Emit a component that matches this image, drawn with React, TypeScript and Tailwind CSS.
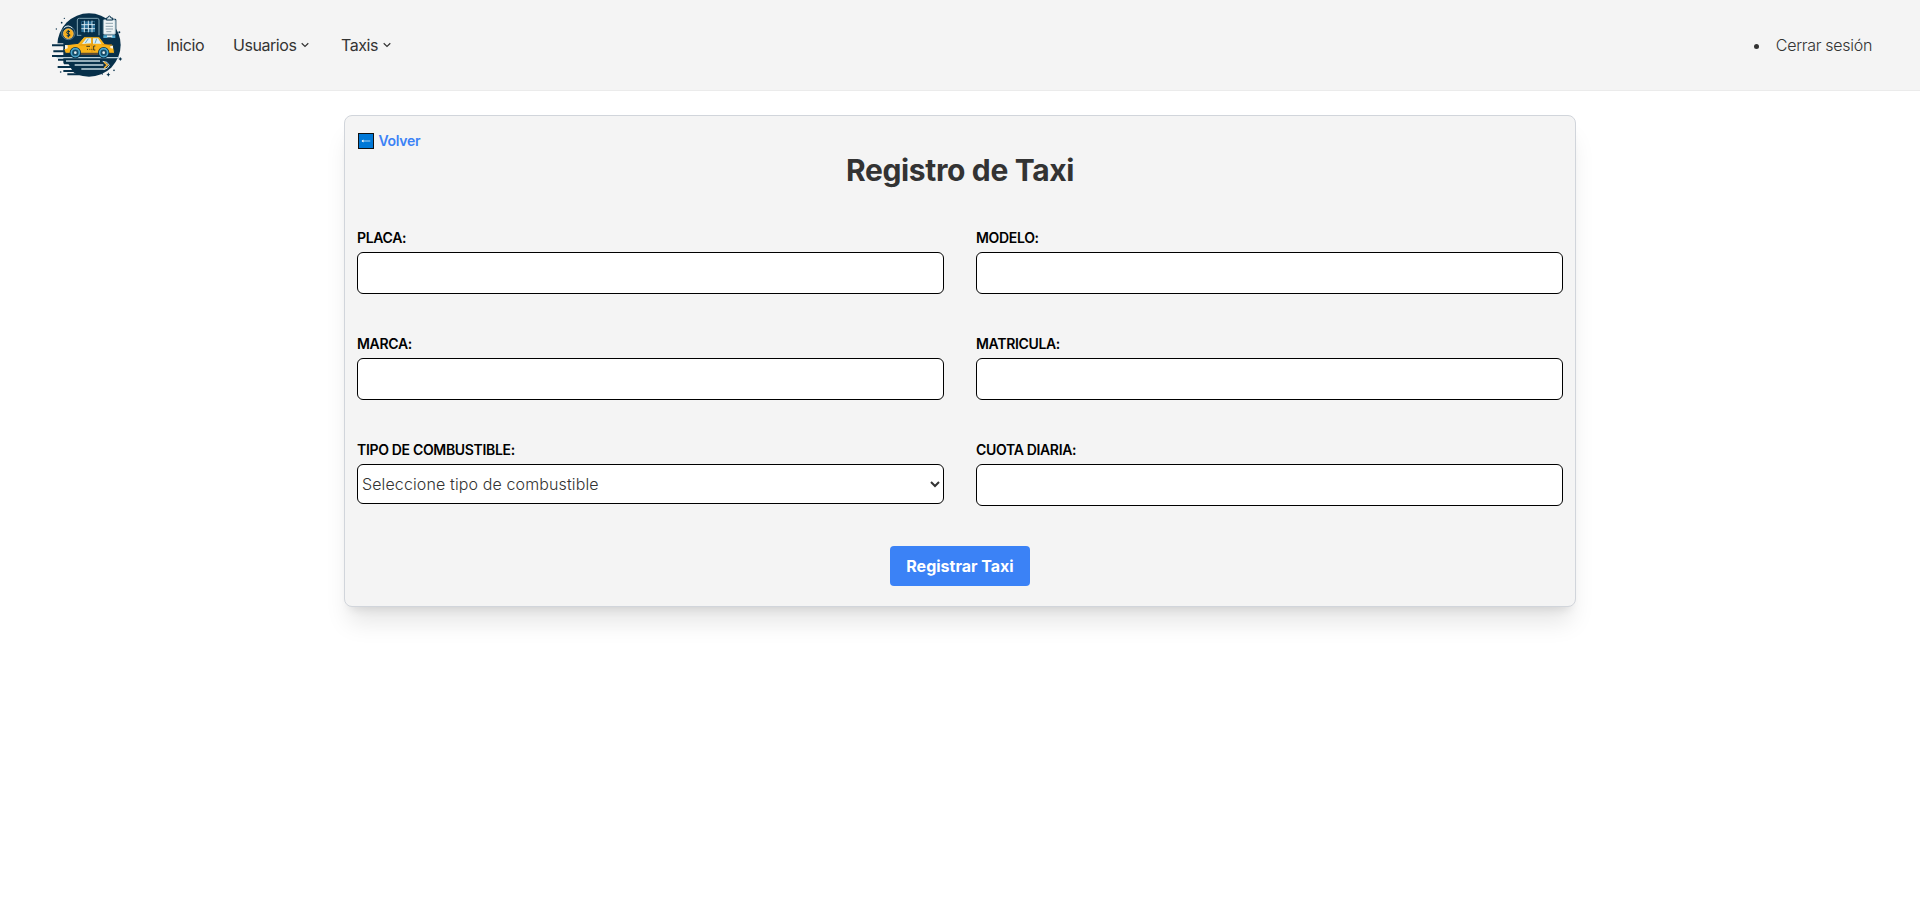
import React from "react";

function Logo() {
  return (
    <svg className="block h-[70px] w-[75px]" viewBox="30 30 225 210" fill="none" aria-label="Taxi">
      <circle cx="147" cy="135" r="95" fill="#07304a" />
      <path d="M30 191H85L110 233H30Z" fill="#f4f4f4" />
      <path d="M30 130H70V189H30Z" fill="#f4f4f4" />
      <path d="M36 136H78M40 154H78M36 168H100" stroke="#07304a" strokeWidth="6" />
      <path d="M54 179H120M72 190H125M53 201H140M70 213H130M82 223H150" stroke="#07304a" strokeWidth="6" />
      <path d="M50 173H238" stroke="#b9d0da" strokeWidth="4" />
      <path d="M78 183H180M104 195H190M124 207H196" stroke="#c5d8df" strokeWidth="4" />
      <path d="M188 184Q204 184 208 196Q204 208 190 208" stroke="#c5d8df" strokeWidth="3" />
      <path d="M192 186L202 195L193 204" stroke="#f5b335" strokeWidth="5" />
      <path d="M112 108V60Q112 55 118 55H172Q177 55 177 60V106M112 106H124" stroke="#7fa3b3" strokeWidth="3" />
      <path d="M124 64H165V96H124Z" fill="#286f98" />
      <path d="M124 74H165M124 86H165M133 62V97M145 62V97M156 62V97" stroke="#e9f4f8" strokeWidth="2.5" />
      <path d="M126 66H131V72H126ZM147 76H154V84H147ZM135 88H143V94H135ZM158 66H164V72H158Z" fill="#07304a" />
      <rect x="187" y="56" width="42" height="60" rx="4" fill="#07304a" />
      <rect x="190" y="59" width="36" height="44" rx="3" fill="#eef4f6" stroke="#8aa5b3" strokeWidth="3" />
      <path d="M199 60V54H203Q204 48 208 48Q212 48 213 54H218V60Z" fill="#d6e5eb" stroke="#07304a" strokeWidth="3" />
      <path d="M197 70H219M197 79H219M197 87H219M199 95H214" stroke="#607d8c" strokeWidth="2" />
      <path d="M190 106H202V114H190ZM214 106H226V114H214Z" fill="#51a9cf" />
      <path d="M201 106H217V112H201Z" fill="#e5f0f4" />
      <circle cx="85" cy="99" r="20" fill="#07304a" stroke="#7799a9" strokeWidth="2" />
      <path d="M72 83Q84 72 97 84" stroke="#dbe7ec" strokeWidth="3" />
      <circle cx="85" cy="101" r="15" fill="#f7ae1c" stroke="#ffd078" strokeWidth="2" />
      <path d="M90 95Q80 91 80 97Q80 101 85 101Q90 102 90 106Q88 110 80 107M85 90V112" stroke="#07304a" strokeWidth="3" />
      <path d="M78 134L115 130L132 110H178L194 131L220 136L224 160H76L72 149Z" fill="#f9b319" stroke="#07304a" strokeWidth="3" />
      <path d="M126 132L139 115H153V130ZM158 115H174L184 131H159Z" fill="#d9eef6" />
      <path d="M136 129L145 116M165 130L170 116" stroke="#6aa7bf" strokeWidth="3" />
      <path d="M118 135H156V157M157 112V134M187 134H216" stroke="#ce8612" strokeWidth="2" />
      <path d="M75 135L83 136V145L75 148Z" fill="#f7f4e9" />
      <path d="M219 137V146L211 144V138Z" fill="#f7f4e9" />
      <path d="M139 139H150M141 148H144M148 148H151M154 148H157M166 138H161V150H166" stroke="#3c3b24" strokeWidth="3" />
      <path d="M120 162H177" stroke="#89592a" strokeWidth="4" />
      <circle cx="106" cy="158" r="17" fill="#07304a" />
      <circle cx="106" cy="158" r="12" fill="#164c68" stroke="#4aa5cb" strokeWidth="5" />
      <circle cx="106" cy="158" r="4" fill="#e6edf0" />
      <circle cx="191" cy="158" r="17" fill="#07304a" />
      <circle cx="191" cy="158" r="12" fill="#164c68" stroke="#4aa5cb" strokeWidth="5" />
      <circle cx="191" cy="158" r="4" fill="#e6edf0" />
      <g fill="#07304a">
        <circle cx="73" cy="55" r="2" />
        <circle cx="65" cy="68" r="2.5" />
        <circle cx="49" cy="87" r="2" />
        <circle cx="61" cy="122" r="3" />
        <circle cx="62" cy="216" r="2.5" />
        <circle cx="238" cy="97" r="3" />
        <path d="M241 171L243 175L247 177L243 179L241 183L239 179L235 177L239 175Z" />
        <path d="M205 217L207 222L211 224L207 226L205 230L203 226L199 224L203 222Z" />
        <circle cx="222" cy="211" r="2.5" />
        <circle cx="187" cy="222" r="2" />
      </g>
    </svg>
  );
}

function Chevron() {
  return (
    <svg className="h-2 w-2" viewBox="0 0 8 8" fill="none" stroke="#333" strokeWidth="1.2">
      <path d="M0.7 2.2L4 5.4L7.3 2.2" />
    </svg>
  );
}

function Field({ label, children }: { label: string; children?: React.ReactNode }) {
  return (
    <label className="block h-[74px]">
      <span className="mb-1 block text-sm leading-5 font-semibold tracking-[-0.33px] text-black">{label}</span>
      {children ?? (
        <input className="block h-[42px] w-full rounded-md border border-black bg-white px-3 outline-none" />
      )}
    </label>
  );
}

export default function App() {
  return (
    <div className="min-h-[919px] bg-white font-[Inter,sans-serif] text-[#333]">
      <nav className="flex h-[91px] items-center border-b border-[#ebebeb] bg-[#f4f4f4] pr-12 pl-[50px]">
        <Logo />
        <div className="ml-[41.5px] flex items-center text-base tracking-[-0.45px]">
          <a className="mr-[29px]">Inicio</a>
          <a className="mr-[31.5px] flex items-center gap-[5px]">Usuarios <Chevron /></a>
          <a className="flex items-center gap-[5.5px]">Taxis <Chevron /></a>
        </div>
        <ul className="ml-auto list-disc font-light tracking-[-0.3px]">
          <li className="pl-[5px]">Cerrar sesión</li>
        </ul>
      </nav>
      <main className="mx-auto mt-6 h-[492px] w-[1232px] rounded-lg border border-[#d1d5db] bg-[#f4f4f4] px-3 pt-4 shadow-xl">
        <a className="flex h-[18px] items-center gap-1 text-sm font-semibold tracking-[-0.3px] text-[#3b82f6]">
          <svg className="ml-px h-4 w-4" viewBox="0 0 16 16">
            <rect x=".5" y=".5" width="15" height="15" fill="#0078d7" stroke="#111" />
            <path d="M4 8H12.3" stroke="#a9d2f2" />
            <path d="M3.5 8L5.5 6.5V9.5Z" fill="#fff" />
          </svg>
          <span className="pl-[0.5px]">Volver</span>
        </a>
        <h1 className="text-center text-3xl leading-10 font-bold tracking-[-0.35px]">Registro de Taxi</h1>
        <div className="mt-[38px] grid grid-cols-2 gap-x-8 gap-y-8">
          <Field label="PLACA:" />
          <Field label="MODELO:" />
          <Field label="MARCA:" />
          <Field label="MATRICULA:" />
          <Field label="TIPO DE COMBUSTIBLE:">
            <select className="block h-10 w-full rounded-md border border-black bg-white font-light tracking-[0.12px] text-[#333]">
              <option>Seleccione tipo de combustible</option>
            </select>
          </Field>
          <Field label="CUOTA DIARIA:" />
        </div>
        <button className="mx-auto mt-8 block h-10 w-[140px] rounded bg-[#3b82f6] font-bold text-white">Registrar Taxi</button>
      </main>
    </div>
  );
}
